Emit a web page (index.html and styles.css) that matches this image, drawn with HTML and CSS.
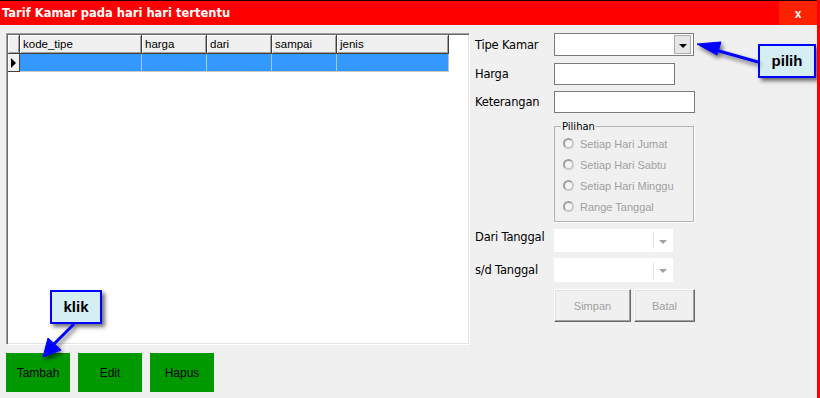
FILE: index.html
```html
<!DOCTYPE html>
<html lang="id">
<head>
    <meta charset="UTF-8">
    <title>Tarif Kamar pada hari hari tertentu</title>
    <link rel="stylesheet" href="styles.css">
</head>
<body>
    <div class="window">
        <div class="titlebar">
            <div class="title">Tarif Kamar pada hari hari tertentu</div>
            <div class="close">x</div>
        </div>

        <div class="content">
            <div class="left">
                <div class="grid">
                    <div class="grid-head">
                        <div class="corner"></div>
                        <div class="col c-kode">kode_tipe</div>
                        <div class="col c-mid">harga</div>
                        <div class="col c-mid">dari</div>
                        <div class="col c-mid">sampai</div>
                        <div class="col c-jenis">jenis</div>
                    </div>
                    <div class="grid-row">
                        <div class="selector"><span class="pointer"></span></div>
                        <div class="cell c-kode"></div>
                        <div class="cell c-mid"></div>
                        <div class="cell c-mid"></div>
                        <div class="cell c-mid"></div>
                        <div class="cell c-jenis"></div>
                    </div>
                </div>
                <div class="actions">
                    <button class="green-btn">Tambah</button>
                    <button class="green-btn">Edit</button>
                    <button class="green-btn">Hapus</button>
                </div>
            </div>

            <div class="form">
                <div class="row row-tipe">
                    <label class="lbl">Tipe Kamar</label>
                    <div class="combo">
                        <span class="drop-btn"><span class="tri"></span></span>
                    </div>
                </div>
                <div class="row row-harga">
                    <label class="lbl">Harga</label>
                    <div class="textbox tb-harga"></div>
                </div>
                <div class="row row-ket">
                    <label class="lbl">Keterangan</label>
                    <div class="textbox tb-ket"></div>
                </div>
                <fieldset class="group">
                    <legend>Pilihan</legend>
                    <div class="radio"><span class="dot"></span>Setiap Hari Jumat</div>
                    <div class="radio"><span class="dot"></span>Setiap Hari Sabtu</div>
                    <div class="radio"><span class="dot"></span>Setiap Hari Minggu</div>
                    <div class="radio"><span class="dot"></span>Range Tanggal</div>
                </fieldset>
                <div class="row row-dari">
                    <label class="lbl lbl-up">Dari Tanggal</label>
                    <div class="date-box"><span class="sep"></span><span class="tri-grey"></span></div>
                </div>
                <div class="row row-sd">
                    <label class="lbl">s/d Tanggal</label>
                    <div class="date-box"><span class="sep"></span><span class="tri-grey"></span></div>
                </div>
                <div class="row row-btns">
                    <button class="sys-btn btn-simpan" disabled>Simpan</button>
                    <button class="sys-btn btn-batal" disabled>Batal</button>
                </div>
            </div>
        </div>

        <!-- callouts -->
        <div class="callout callout-pilih">pilih</div>
        <div class="callout callout-klik">klik</div>
        <svg class="arrows" width="820" height="398" viewBox="0 0 820 398">
            <defs>
                <filter id="sh" x="-20%" y="-50%" width="160%" height="220%">
                    <feDropShadow dx="2" dy="3" stdDeviation="2" flood-color="#000" flood-opacity="0.55"/>
                </filter>
            </defs>
            <g fill="#0000ff" stroke="#0000ff" filter="url(#sh)">
                <line x1="758" y1="62" x2="712" y2="49" stroke-width="3"/>
                <polygon points="697,44 721,42 717,55" stroke-width="1"/>
                <line x1="74" y1="324" x2="53" y2="345" stroke-width="3"/>
                <polygon points="43,357 48,338 61,350" stroke-width="1"/>
            </g>
        </svg>
    </div>
</body>
</html>
```

FILE: styles.css
```css
body {
    margin: 0;
    background-color: #f0f0f0;
    font-family: 'Liberation Sans', Arial, sans-serif;
}

.window {
    position: relative;
    width: 817px;
    height: 398px;
    border-right: 3px solid #ff0000;
    background-color: #f0f0f0;
    overflow: hidden;
}

.titlebar {
    display: flex;
    height: 24px;
    border-top: 1px solid #200000;
    background-color: #ff0000;
}

.title {
    flex: 1;
    padding-left: 2px;
    color: #fff;
    font-family: 'DejaVu Sans', sans-serif;
    font-size: 11.5px;
    font-weight: bold;
    line-height: 24px;
}

.close {
    width: 38px;
    background-color: #ff2200;
    color: #fff;
    font-size: 12px;
    font-weight: bold;
    text-align: center;
    line-height: 26px;
}

.content {
    display: flex;
    padding: 8px 0 0 6px;
}

/* grid kiri */
.grid {
    width: 461px;
    height: 309px;
    border-top: 1px solid #a0a0a0;
    border-left: 1px solid #a0a0a0;
    border-right: 1px solid #ffffff;
    border-bottom: 1px solid #ffffff;
    box-shadow: inset 1px 1px 0 #696969, inset -1px -1px 0 #e3e3e3;
    background-color: #fff;
    padding: 1px 0 0 1px;
}

.grid-head,
.grid-row {
    display: flex;
}

.grid-head {
    height: 19px;
}

.corner,
.col {
    box-sizing: border-box;
    height: 19px;
    background-color: #f0f0f0;
    border-right: 1px solid #404040;
    border-bottom: 1px solid #404040;
    box-shadow: inset 1px 1px 0 #fff, inset -1px -1px 0 #a0a0a0;
    font-size: 11.5px;
    line-height: 18px;
    padding-left: 3px;
    color: #000;
}

.corner {
    width: 12px;
}

.c-kode { width: 122px; }
.c-mid { width: 65px; }
.c-jenis { width: 112px; }

.grid-row {
    height: 18px;
}

.selector {
    box-sizing: border-box;
    width: 12px;
    height: 18px;
    background-color: #f0f0f0;
    border-right: 1px solid #404040;
    border-bottom: 1px solid #404040;
    box-shadow: inset 1px 0 0 #fff;
    display: flex;
    align-items: center;
    padding-left: 3px;
}

.pointer {
    width: 0;
    height: 0;
    border-top: 5px solid transparent;
    border-bottom: 5px solid transparent;
    border-left: 5px solid #000;
}

.cell {
    box-sizing: border-box;
    height: 18px;
    background-color: #3399ff;
    border-right: 1px solid #a8c8e8;
    border-bottom: 1px solid #c8c8c8;
}

.actions {
    display: flex;
    gap: 8px;
    margin-top: 8px;
}

.green-btn {
    width: 64px;
    height: 39px;
    border: none;
    background-color: #009900;
    color: #000;
    font-family: 'Liberation Sans', Arial, sans-serif;
    font-size: 12px;
    padding: 0;
}

/* form kanan */
.form {
    margin-left: 5px;
    width: 230px;
}

.row {
    display: flex;
    align-items: center;
}

.lbl {
    width: 79px;
    font-family: 'DejaVu Sans', sans-serif;
    font-size: 11.5px;
    letter-spacing: -0.2px;
    color: #000;
}

.lbl-up {
    position: relative;
    top: -4px;
}

.row-tipe { height: 23px; }
.row-harga { height: 22px; margin-top: 7px; }
.row-ket { height: 22px; margin-top: 6px; }
.row-dari { height: 23px; margin-top: 7px; }
.row-sd { height: 24px; margin-top: 6px; }
.row-btns { height: 33px; margin-top: 7px; padding-left: 79px; gap: 3px; }

.combo {
    box-sizing: border-box;
    width: 140px;
    height: 23px;
    border: 1px solid #7a7a7a;
    background-color: #fff;
    display: flex;
    justify-content: flex-end;
    align-items: center;
    padding-right: 2px;
}

.drop-btn {
    box-sizing: border-box;
    width: 17px;
    height: 19px;
    background-color: #e6e6e6;
    border: 1px solid #acacac;
    display: flex;
    align-items: center;
    justify-content: center;
}

.tri {
    width: 0;
    height: 0;
    border-left: 4px solid transparent;
    border-right: 4px solid transparent;
    border-top: 4px solid #000;
    margin-top: 2px;
}

.textbox {
    box-sizing: border-box;
    height: 22px;
    border: 1px solid #7a7a7a;
    background-color: #fff;
}

.tb-harga { width: 121px; }
.tb-ket { width: 141px; }

.group {
    box-sizing: border-box;
    width: 140px;
    height: 101px;
    margin: 8px 0 0 79px;
    padding: 0 0 0 8px;
    border: 1px solid #b4b4b4;
    box-shadow: 1px 1px 0 #fff;
}

.group legend {
    font-family: 'DejaVu Sans', sans-serif;
    font-size: 10px;
    padding: 0 1px;
    margin-left: -2px;
    color: #000;
}

.radio {
    display: flex;
    align-items: center;
    height: 21px;
    font-size: 11px;
    color: #a0a0a0;
}

.radio:first-of-type {
    margin-top: 1px;
}

.dot {
    box-sizing: border-box;
    width: 11px;
    height: 11px;
    border-radius: 50%;
    border: 2px solid #c8c8c8;
    border-top-color: #a0a0a0;
    border-left-color: #a0a0a0;
    background-color: #f4f4f4;
    margin-right: 6px;
}

.date-box {
    box-sizing: border-box;
    width: 119px;
    height: 100%;
    background-color: #fff;
    display: flex;
    align-items: center;
    justify-content: flex-end;
    padding-right: 6px;
}

.sep {
    width: 1px;
    height: 17px;
    background-color: #e6e6e6;
    margin-right: 5px;
}

.tri-grey {
    width: 0;
    height: 0;
    border-left: 4px solid transparent;
    border-right: 4px solid transparent;
    border-top: 4px solid #a0a0a0;
    margin-top: 2px;
}

.sys-btn {
    box-sizing: border-box;
    height: 33px;
    background-color: #f0f0f0;
    border: 1px solid;
    border-color: #fff #696969 #696969 #fff;
    box-shadow: inset -1px -1px 0 #a0a0a0, inset 1px 1px 0 #e3e3e3;
    color: #a0a0a0;
    font-family: 'Liberation Sans', Arial, sans-serif;
    font-size: 11px;
}

.btn-simpan { width: 77px; }
.btn-batal { width: 61px; }

/* penanda (callout) */
.callout {
    position: absolute;
    box-sizing: border-box;
    background-color: #d4eef4;
    border: 2px solid #0000ff;
    box-shadow: 3px 3px 4px rgba(0, 0, 0, 0.55);
    font-size: 15px;
    font-weight: bold;
    color: #000;
    text-align: center;
}

.callout-pilih {
    left: 758px;
    top: 44px;
    width: 58px;
    height: 34px;
    line-height: 30px;
}

.callout-klik {
    left: 50px;
    top: 290px;
    width: 52px;
    height: 34px;
    line-height: 30px;
}

.arrows {
    position: absolute;
    left: 0;
    top: 0;
    pointer-events: none;
}
```
